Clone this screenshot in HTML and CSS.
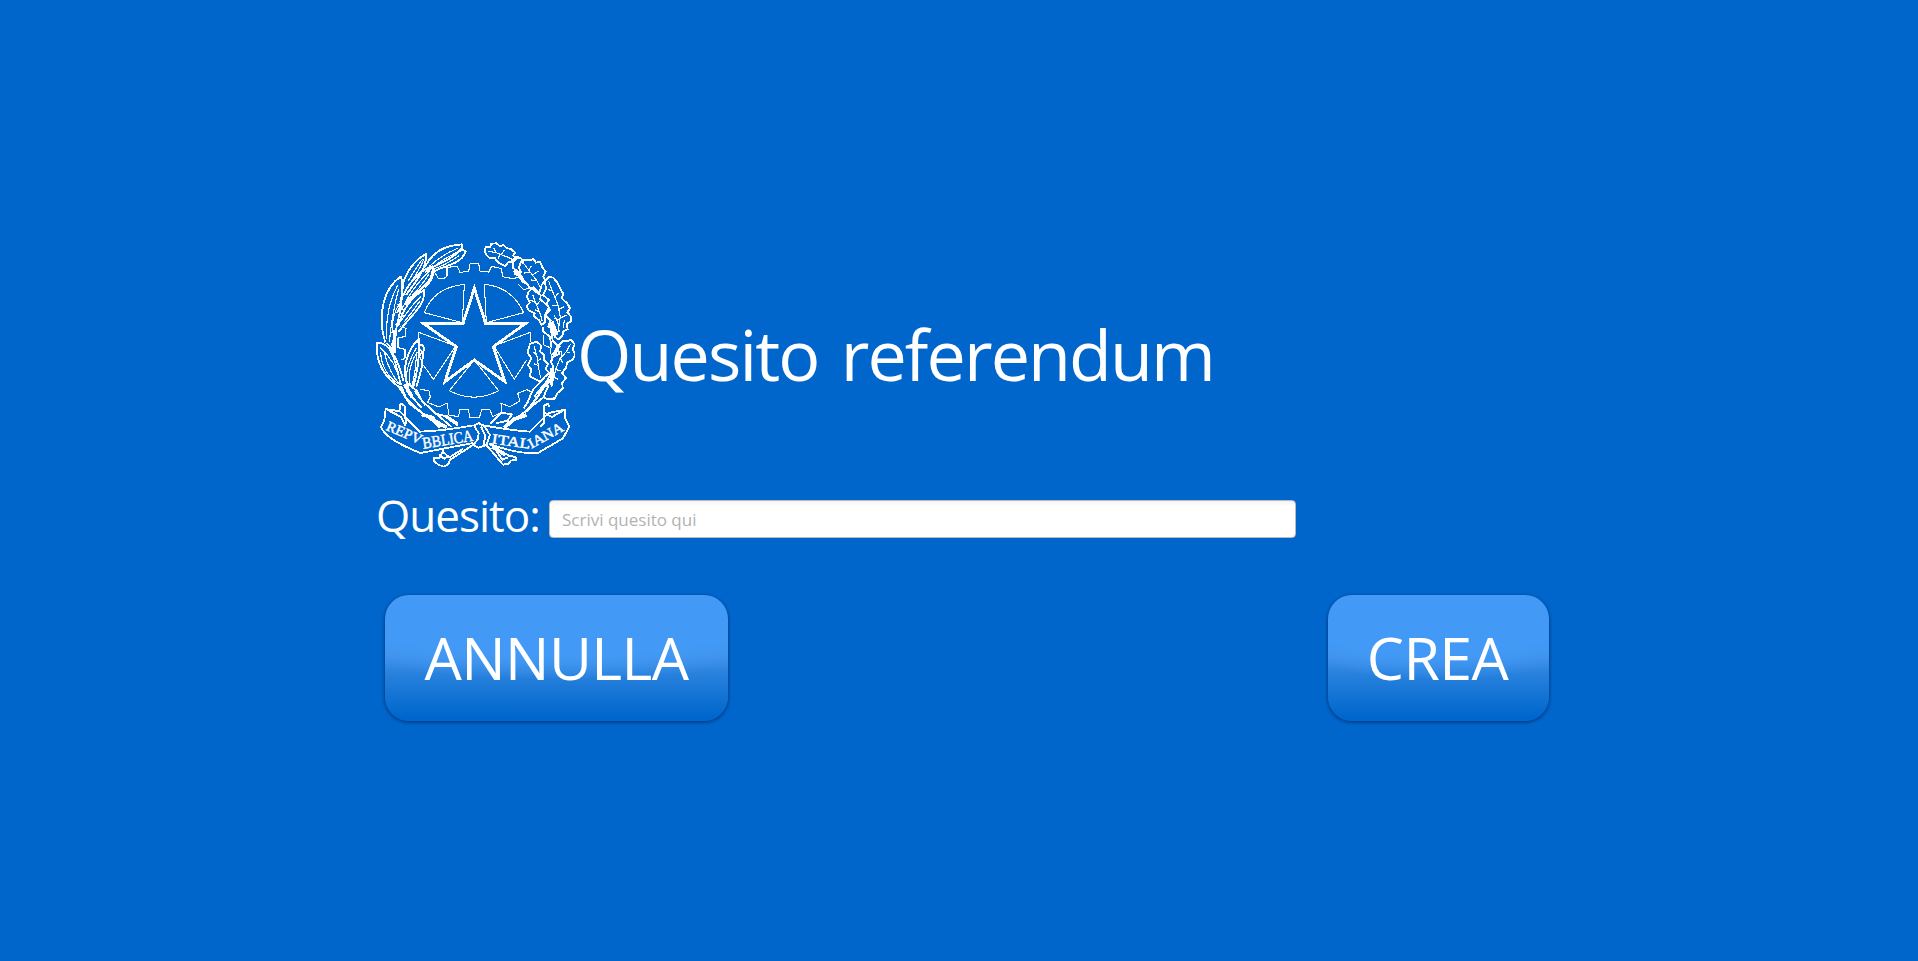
FILE: index.html
```html
<!DOCTYPE html>
<html lang="it">
<head>
<meta charset="utf-8">
<title>Quesito referendum</title>
<link rel="stylesheet" href="styles.css">
</head>
<body>
<main class="page">
  <header class="header">
    <svg class="emblem" viewBox="18 18 597 684" aria-hidden="true">
      <g class="thin">
        <path d="M190 106 205 130 220 131 231 124 231 97 262 94 270 112 296 109 300 86 326 86 330 109 356 111 365 94 395 101 397 125 430 131 450 125M445 148 462 165 478 158M90 275 108 280 105 305 84 308 84 338 105 343 105 370 94 375M520 300 522 330 540 338 545 370M150 462 177 468 181 486 173 502 206 516 231 504 237 540 265 545 270 524 295 524 300 548 328 548 335 524 360 524 368 545 396 532 393 505 420 515 450 498 443 475 470 464 482 470"/>
        <path d="M283 148 277 263 163 233Q190 158 283 148ZM343 148 349 263 461 233Q425 155 343 148ZM257 333 146 292 143 325M257 333 190 433 160 390M372 333 481 292 481 322M372 333 433 433 470 375M313 375 238 467Q313 506 386 467Z"/>
      </g>
      <path class="star" d="M313 160 347 266H466L370 335 405 440 313 375 225 440 259 335 161 266H279Z"/>
      <g class="leaf">
        <path d="M165 95C190 48 225 32 275 28L277 38C240 82 202 81 165 112M277 43 287 50C273 91 220 90 190 111M98 148C112 105 137 73 168 57 172 96 139 140 108 180M90 202C108 155 145 105 187 94 196 140 145 162 106 210M165 158C178 146 190 128 194 98M85 272C100 221 128 182 163 165 165 215 125 238 86 290M46 322C20 240 42 157 93 124 105 175 88 250 65 334M50 324 73 350M95 460C45 432 15 380 21 323 57 320 86 376 100 438M115 455C93 407 109 348 147 310 151 370 140 420 128 462M148 330C165 327 163 343 158 360 160 400 145 430 139 457M94 130Q104 155 91 200M60 350Q72 355 92 450"/>
        <path class="vein" d="M178 94Q214 60 263 40M190 102Q225 92 268 61M174 109Q230 62 277 46M115 137Q140 96 157 73M109 160Q142 119 162 72M96 220Q135 146 179 108M112 196Q140 172 177 118M94 257Q123 213 153 184M103 260Q128 230 150 198M50 311Q45 220 83 151M58 322Q65 240 86 161M66 294Q66 235 90 205M32 350Q34 414 88 448M31 338Q76 377 94 447M43 352Q56 410 90 450M110 444Q104 396 139 339M120 446Q111 400 142 350M126 455Q139 400 139 350M149 342 156 350 148 365 156 378M77 235 96 221M82 207 102 226M76 270 97 250M81 225 98 240M84 248 103 242M94 196 85 228"/>
        <path d="M352 63 344 50 347 37 361 36 364 26 379 25 391 34 401 30 410 39 424 43 436 53 429 62 440 70 429 80 414 82 407 93 394 88 381 79 374 68 359 69ZM425 78 440 65 455 72 460 85M452 82 459 74 476 76 491 72 497 83 511 81 516 95 527 110 520 125 525 136 515 150 508 174 491 157 482 162 471 146 457 140 448 124 453 110 447 98ZM430 82 429 99 451 114M432 117 455 124 465 142M525 140 536 126 550 128 560 140 568 155 579 175 576 191 592 205 600 220 592 232 604 246 603 260 591 266 593 283 580 288 577 302 564 314 550 300 548 284 535 274 542 257 525 240 541 226 530 205 537 195 519 180 528 162ZM471 186 475 171 487 160 500 172 512 180 511 194 523 203 537 218 530 231 524 246 525 262 514 270 508 256 491 244 494 235 476 226 470 212 480 203ZM570 326 580 318 592 319 603 314 614 328 608 343 616 359 608 374 592 382 588 398 576 414 588 429 577 443 578 460 562 475 554 491 535 492M570 326 562 340 568 356 550 365 543 380 551 396 541 410M480 326 500 320 514 332 510 350 523 360 521 376 535 386 527 402 538 414 524 426 512 440 492 430 479 424 484 404 474 390 484 370 473 352ZM520 275 518 288 540 305 545 340M541 270 548 317 562 330M552 490 530 492 520 485"/>
        <path class="vein" d="M354 48 378 53 412 66 430 75M378 51 371 39M394 58 403 45M389 60 384 71M461 85 478 108 501 138 512 160M476 105 484 93M489 119 506 108M481 113 463 114M500 137 484 135M536 139 550 175 563 207 571 245 564 290M547 168 535 164M555 187 565 174M562 211 545 213M565 224 583 215M571 249 589 240M571 257 554 249M488 179 499 208 510 235 517 259M496 202 481 195M501 209 510 198M508 230 494 224M602 326 589 350 570 371 557 404 545 455M588 350 601 354M575 365 573 349M571 371 580 385M557 404 572 407M552 427 565 433M549 432 538 422M492 333 501 365 507 405 512 430M499 359 488 350M503 379 513 370M504 391 491 386M552 240 563 260 568 292M538 264 554 287 555 310M583 254 580 278"/>
        <path d="M94 454 109 491 157 535 211 576M108 440 142 469 156 497 199 537 245 576M83 450 119 507 152 531M109 466 155 519M134 468 166 511M199 537 219 541 265 572M198 537 232 544 263 565M540 419 519 461 474 523 410 575M536 451 520 487 451 541 401 577M520 433 489 463 474 500 461 520M534 434 493 485M517 465 471 531M427 537 392 534 362 566M427 537 412 557 378 565"/>
      </g>
      <path class="heavy" d="M155 538 187 548 211 577M190 556 230 577M404 576 433 552 470 540M547 400 544 450M568 330 550 362M104 448 126 486M539 433 524 455M545 260 561 300M75 285 71 355M432 106 453 118"/>
      <g class="ribbon">
        <path d="M107 574 92 545 47 522 43 555 33 575Q45 612 151 654L310 624M47 522 90 529 148 590Q220 588 310 571M89 512 94 506 104 513V530L108 566M89 512 90 526M340 571Q420 586 480 590L535 534 584 524 586 552 598 574 579 610 502 655Q434 656 358 626M535 534 584 524 546 546 523 533V512L534 506 538 516M523 520V563L511 575M312 571 326 564 343 574 360 600 350 630 326 638 310 630 324 612 326 595ZM333 574 346 604 340 632"/>
        <path d="M310 629 241 674 234 689 222 695 207 690 191 679 193 668 209 669 220 645M207 660 223 671 237 663M218 650 238 667 279 642M350 631 390 678 399 689 416 686 422 677 438 675 437 666 416 662 358 627M380 649 397 674 414 667M365 638 405 662"/>
      </g>
      <g class="motto">
        <text transform="translate(46 584) rotate(23)" textLength="112" lengthAdjust="spacingAndGlyphs">REPV</text>
        <text class="motto-large" transform="translate(160 641) rotate(-9)" textLength="153" lengthAdjust="spacingAndGlyphs">BBLICA</text>
        <text transform="translate(364 625) rotate(8)" textLength="116" lengthAdjust="spacingAndGlyphs">ITAL</text>
        <text transform="translate(484 641) rotate(-29)" textLength="114" lengthAdjust="spacingAndGlyphs">IANA</text>
      </g>
    </svg>
    <h1 class="title">Quesito referendum</h1>
  </header>
  <div class="field">
    <label class="label" for="quesito">Quesito:</label>
    <input class="input" id="quesito" type="text" placeholder="Scrivi quesito qui">
  </div>
  <div class="actions">
    <button class="button button-cancel" type="button">ANNULLA</button>
    <button class="button button-create" type="button">CREA</button>
  </div>
</main>
</body>
</html>
```
FILE: styles.css
```css
* {
  box-sizing: border-box;
}

body {
  margin: 0;
  background: #0066cc;
  color: #fff;
  font-family: "Open Sans", "Noto Sans", sans-serif;
}

.page {
  width: 1173px;
  height: 961px;
  margin-left: 376px;
  padding-top: 241px;
}

.header {
  display: flex;
  align-items: center;
  height: 228px;
}

.emblem {
  flex: none;
  width: 199px;
  height: 228px;
  fill: none;
  stroke: #fff;
  stroke-linejoin: round;
  shape-rendering: crispEdges;
}

.thin {
  stroke-width: 3.2;
}

.star {
  stroke-width: 8.5;
  stroke-linejoin: miter;
}

.leaf,
.ribbon {
  stroke-width: 5.6;
}

.leaf .vein {
  stroke-width: 3.4;
}

.heavy {
  stroke-width: 11;
}

.motto {
  fill: #fff;
  stroke: #fff;
  stroke-width: 1.4;
  font: 43px "Liberation Serif", serif;
}

.motto-large {
  font-size: 49px;
}

.title {
  margin: 0;
  padding: 0 0 2px 2px;
  font-size: 70px;
  font-weight: 400;
  letter-spacing: -1.9px;
  word-spacing: 6px;
  line-height: 96px;
  white-space: nowrap;
}

.field {
  display: flex;
  align-items: flex-start;
  height: 60px;
  margin-top: 16px;
}

.label {
  width: 173px;
  font-size: 44px;
  letter-spacing: -1px;
  line-height: 60px;
  white-space: nowrap;
}

.input {
  width: 747px;
  height: 38px;
  margin-top: 15px;
  padding: 1px 12px 0;
  border: 1px solid #bbb;
  border-radius: 4px;
  background: linear-gradient(#f3f3f3, #fff 5px);
  font: 17px "Open Sans", sans-serif;
}

.input::placeholder {
  color: #b2b2b2;
}

.actions {
  display: flex;
  justify-content: space-between;
  padding: 50px 0 0 9px;
}

.button {
  height: 126px;
  padding: 0 0 3px;
  border: 0;
  border-radius: 24px;
  background:
    radial-gradient(ellipse 90% 60% at 50% 0, #429af6 80%, transparent 112%),
    linear-gradient(#4a9cf3, #3f8fe6 48%, #2680dc 64%, #0066cc 97%);
  box-shadow: 0 1px 3px 1px rgba(0, 30, 80, 0.5);
  color: #fff;
  font: 59px "Open Sans", sans-serif;
  letter-spacing: -0.6px;
}

.button-cancel {
  width: 343px;
}

.button-create {
  width: 221px;
  padding-right: 2px;
}
```
